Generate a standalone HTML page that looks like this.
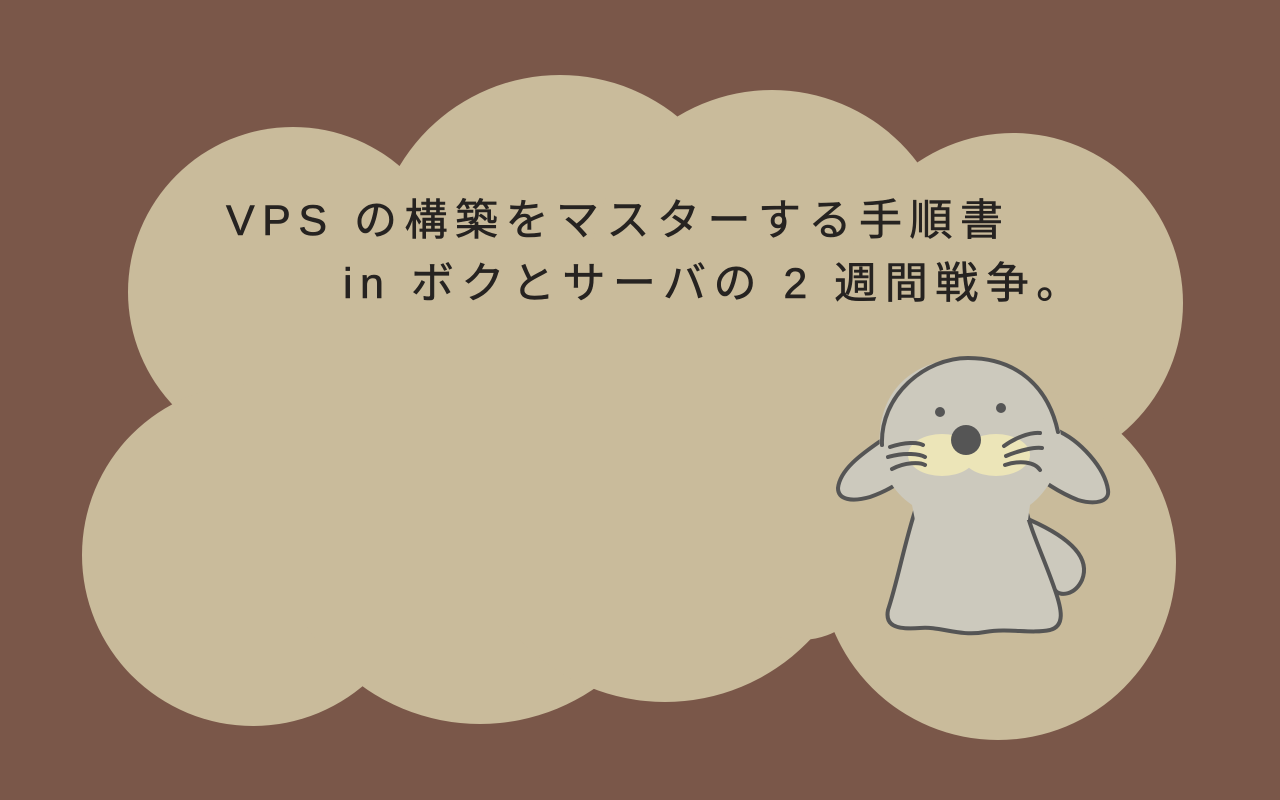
<!DOCTYPE html>
<html><head><meta charset="utf-8"><style>
html,body{margin:0;padding:0}
body{width:1280px;height:800px;background:#7a5749;position:relative;overflow:hidden}
svg{position:absolute;left:0;top:0}
.t{position:absolute;font-family:"Liberation Sans","Noto Sans CJK JP",sans-serif;color:#262321;font-size:43px;white-space:nowrap;letter-spacing:7.5px;line-height:1;-webkit-text-stroke:0.6px #262321}
</style></head><body>
<svg width="1280" height="800">
<g fill="#c9bb9b">
<circle cx="293" cy="292" r="165"/>
<circle cx="560" cy="262" r="187"/>
<circle cx="772" cy="272" r="182"/>
<circle cx="1013" cy="303" r="170"/>
<circle cx="253" cy="555" r="171"/>
<circle cx="480" cy="522" r="202"/>
<circle cx="665" cy="502" r="200"/>
<circle cx="998" cy="562" r="178"/>
<circle cx="800" cy="560" r="80"/>
<rect x="250" y="250" width="800" height="370"/>
</g>
<g stroke="#555" stroke-width="4" stroke-linecap="round" stroke-linejoin="round" fill="#ccc9bd">
<path d="M1030 520 C1075 540 1090 560 1082 580 C1075 595 1060 597 1055 590"/>
<path d="M917 505 C905 540 898 580 888 610 C885 625 895 630 920 628 C940 626 960 637 985 632 C1010 628 1030 634 1050 630 C1065 626 1062 610 1055 590 C1045 560 1030 530 1025 505 Z"/>
<path d="M882 440 C860 455 840 470 838 488 C838 500 852 502 870 497 C890 490 905 480 912 470"/>
<path d="M1056 430 C1080 440 1105 468 1108 490 C1110 502 1095 505 1078 500 C1060 493 1040 480 1030 470"/>
</g>
<path d="M880 430 C885 380 925 358 968 358 C1015 358 1048 385 1060 430 C1066 460 1050 490 1030 505 L1028 520 L915 520 L912 505 C890 490 877 465 880 430 Z" fill="#ccc9bd"/>
<path d="M882 445 C880 395 925 358 968 358 C1015 358 1048 385 1058 432" fill="none" stroke="#555" stroke-width="4" stroke-linecap="round"/>
<ellipse cx="942" cy="455" rx="34" ry="21" fill="#ece5b8"/>
<ellipse cx="996" cy="455" rx="34" ry="21" fill="#ece5b8"/>
<circle cx="966" cy="440" r="15" fill="#555"/>
<circle cx="940" cy="412" r="5" fill="#555"/>
<circle cx="1001" cy="408" r="5" fill="#555"/>
<g stroke="#555" stroke-width="4" fill="none" stroke-linecap="round">
<path d="M890 447 C905 442 918 442 923 445"/>
<path d="M888 457 C905 452 920 454 925 457"/>
<path d="M892 469 C905 462 920 462 925 465"/>
<path d="M1004 446 C1015 438 1030 432 1040 433"/>
<path d="M1006 456 C1020 450 1035 447 1042 448"/>
<path d="M1005 465 C1020 460 1035 462 1040 470"/>
</g>
</svg>
<div class="t" style="left:226px;top:200px">VPS の構築をマスターする手順書</div>
<div class="t" style="left:343px;top:263px">in ボクとサーバの 2 週間戦争。</div>
</body></html>
